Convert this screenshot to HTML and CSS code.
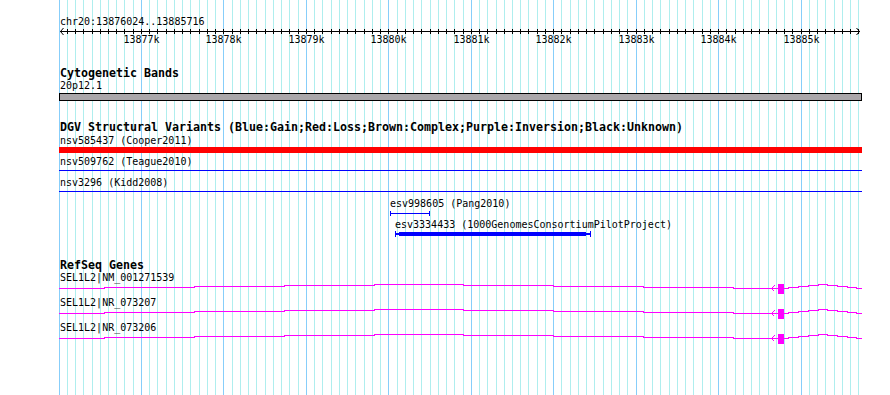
FILE: index.html
```html
<!DOCTYPE html>
<html lang="en">
<head>
    <meta charset="UTF-8">
    <meta name="viewport" content="width=device-width, initial-scale=1.0">
    <title>chr20:13876024..13885716</title>
    <link rel="stylesheet" href="styles.css">
</head>
<body>
    <div class="browser">
        <svg class="grid" id="grid" width="803" height="395"></svg>
        <div class="ruler">
            <svg id="ruler" width="803" height="47">
                <text x="1" y="25">chr20:13876024..13885716</text>
                <rect class="axis" x="1" y="31" width="800" height="1"/>
                <path class="arrow" d="M4.5 28L1.5 31.5L4.5 35"/>
                <path class="arrow" d="M797.5 28L800.5 31.5L797.5 35"/>
            </svg>
        </div>
        <div class="track">
            <div class="track-title">Cytogenetic Bands</div>
            <svg width="803" height="22">
                <text x="1" y="10">20p12.1</text>
                <rect class="band" x="0.5" y="14.5" width="802" height="7"/>
            </svg>
        </div>
        <div class="track">
            <div class="track-title">DGV Structural Variants (Blue:Gain;Red:Loss;Brown:Complex;Purple:Inversion;Black:Unknown)</div>
            <svg width="803" height="106">
                <text x="1" y="11">nsv585437 (Cooper2011)</text>
                <rect class="loss" x="0" y="14" width="803" height="6"/>
                <text x="1" y="32">nsv509762 (Teague2010)</text>
                <rect class="gain" x="0" y="37" width="803" height="1"/>
                <text x="1" y="53">nsv3296 (Kidd2008)</text>
                <rect class="gain" x="0" y="58" width="803" height="1"/>
                <text x="331" y="74">esv998605 (Pang2010)</text>
                <rect class="gain" x="331" y="80" width="40" height="1"/>
                <rect class="gain" x="331" y="78" width="1" height="5"/>
                <rect class="gain" x="370" y="78" width="1" height="5"/>
                <text x="336" y="95">esv3334433 (1000GenomesConsortiumPilotProject)</text>
                <rect class="gain" x="336" y="100" width="196" height="2"/>
                <rect class="gain" x="340" y="99" width="187" height="4"/>
                <rect class="gain" x="336" y="98" width="1" height="6"/>
                <rect class="gain" x="531" y="98" width="1" height="6"/>
            </svg>
        </div>
        <div class="track">
            <div class="track-title">RefSeq Genes</div>
            <svg width="803" height="90">
                <g id="transcript" class="transcript">
                    <path d="M0 17.5H45V16.5H135V15.5H225V14.5H315V13.5H404V14.5H494V15.5H584V16.5H674V17.5H719"/>
                    <path d="M715.5 14.5L712.5 17.5L715.5 20.5"/>
                    <rect x="719" y="13" width="6" height="10"/>
                    <path d="M725 17.5H729V16.5H739V15.5H749V14.5H759V13.5H768V14.5H778V15.5H788V16.5H797V17.5H803"/>
                </g>
                <use href="#transcript" y="25"/>
                <use href="#transcript" y="50"/>
                <text x="1" y="10">SEL1L2|NM_001271539</text>
                <text x="1" y="35">SEL1L2|NR_073207</text>
                <text x="1" y="60">SEL1L2|NR_073206</text>
            </svg>
        </div>
    </div>
    <script>
        const NS = 'http://www.w3.org/2000/svg';
        const START = 13876024;
        const grid = document.getElementById('grid');
        const ruler = document.getElementById('ruler');

        // pixel column of a base, relative to the left edge of the panel
        function xpos(bp) {
            return Math.floor(61 + (bp - START) * 0.08245) - 59;
        }

        function add(parent, tag, attrs, text) {
            const el = document.createElementNS(NS, tag);
            for (const key in attrs) el.setAttribute(key, attrs[key]);
            if (text) el.textContent = text;
            parent.appendChild(el);
            return el;
        }

        for (let bp = 13876000; ; bp += 100) {
            const x = xpos(bp);
            if (x > 802) break;
            const major = bp % 1000 === 0;
            add(grid, 'rect', { x: x, y: 0, width: 1, height: 395, class: major ? 'major' : 'minor' });
            if (x >= 1 && x <= 800) {
                add(ruler, 'rect', { x: x, y: 29, width: 1, height: 5, class: 'axis' });
            }
            if (major && x > 1) {
                add(ruler, 'text', { x: x + 0.5, y: 43, 'text-anchor': 'middle' }, (bp / 1000) + 'k');
            }
        }
    </script>
</body>
</html>
```

FILE: styles.css
```css
body {
    margin: 0;
    background-color: #ffffff;
    font-family: "DejaVu Sans Mono", monospace;
    color: #000;
}
.browser {
    position: relative;
    width: 803px;
    height: 395px;
    margin-left: 59px;
    overflow: hidden;
}
.grid {
    position: absolute;
    top: 0;
    left: 0;
}
.grid .minor {
    fill: #afeeee;
}
.grid .major {
    fill: #87cefa;
}
.ruler,
.track {
    position: relative;
}
.track {
    margin-top: 19px;
}
.ruler svg,
.track svg {
    display: block;
    overflow: visible;
}
.track-title {
    height: 12px;
    padding: 1px 0 0 1px;
    font: bold 11.63px/13px "DejaVu Sans Mono", monospace;
    white-space: nowrap;
}
svg text {
    font-family: "DejaVu Sans Mono", monospace;
    font-size: 10px;
    fill: #000;
}
.axis {
    fill: #000;
}
.arrow {
    fill: none;
    stroke: #000;
    stroke-width: 1;
}
.band {
    fill: #aaa7aa;
    stroke: #000;
    stroke-width: 1;
    shape-rendering: crispEdges;
}
.loss {
    fill: #ff0000;
}
.gain {
    fill: #0000ff;
}
.transcript path {
    fill: none;
    stroke: #ff00ff;
    stroke-width: 1;
    shape-rendering: crispEdges;
}
.transcript rect {
    fill: #ff00ff;
}
```
